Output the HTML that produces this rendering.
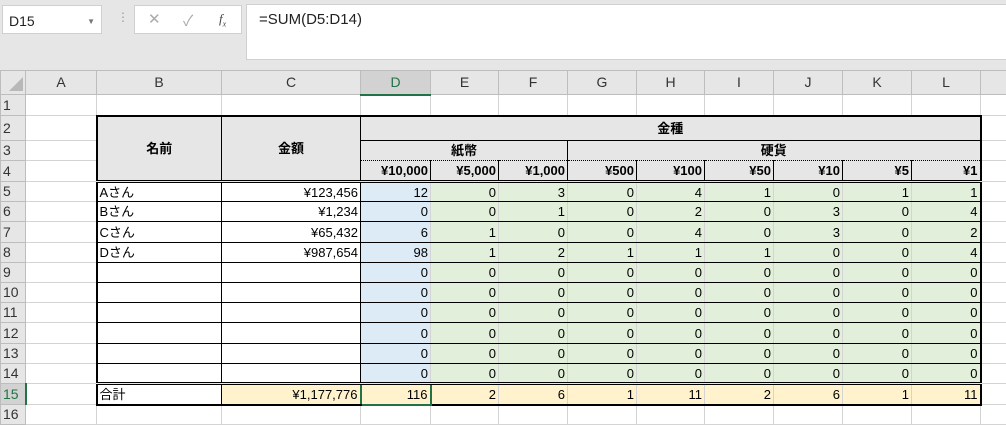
<!DOCTYPE html>
<html><head><meta charset="utf-8">
<style>
*{box-sizing:border-box;margin:0;padding:0}
body{width:1006px;height:420px;overflow:hidden;background:#e6e6e6;font-family:"Liberation Sans","Noto Sans CJK JP",sans-serif;position:relative}
.box{position:absolute;background:#fff;border:1px solid #d0d0d0}
table{position:absolute;left:0;top:70px;border-collapse:collapse;table-layout:fixed;width:1006px;font-size:13px;color:#000}
td{border:1px solid #d4d4d4;background:#fff;height:20px;padding:0 2px;white-space:nowrap;overflow:hidden;line-height:15px}
td.h{background:#e6e6e6;border-color:#bdbdbd;text-align:center;font-size:14px;color:#333}
td.rh{background:#e6e6e6;border-color:#bdbdbd;text-align:left;font-size:14px;color:#333;padding:0 0 0 2px}
td.sel{background:#d2d2d2;border-bottom:2px solid #217346;color:#217346}
td.rsel{background:#d2d2d2;border-right:2px solid #217346;color:#217346}
.g{background:#e7e6e6!important;font-weight:bold;text-align:center;border-color:#000}
.r{text-align:right}
.b{background:#ddebf7!important}
.gr{background:#e2efda!important}
.y{background:#fff2cc!important}
.dr{border-right:1px dotted #000!important}
.bk{border-top:1px solid #000;border-bottom:1px solid #000}
</style></head><body>
<div class="box" style="left:2px;top:5px;width:100px;height:29px;font-size:14px;padding:7px 0 0 6px;color:#222">D15<span style="position:absolute;right:6px;top:11px;font-size:8px;color:#777">▼</span></div>
<div style="position:absolute;left:117px;top:10px;color:#999;font-size:12px">⋮</div>
<div class="box" style="left:134px;top:5px;width:108px;height:29px;color:#aaa;font-size:15px">
<span style="position:absolute;left:13px;top:4px">✕</span><span style="position:absolute;left:48px;top:4px">✓</span><span style="position:absolute;left:84px;top:5px;color:#444;font-style:italic;font-family:'Liberation Serif',serif;font-size:13px">f<sub style="font-size:8px">x</sub></span></div>
<div class="box" style="left:246px;top:4px;width:762px;height:56px;font-size:15px;padding:6px 0 0 12px;color:#222">=SUM(D5:D14)</div>
<table>
<colgroup><col style="width:25px"><col style="width:71px"><col style="width:125px"><col style="width:139px"><col style="width:70px"><col style="width:68px"><col style="width:69px"><col style="width:69px"><col style="width:68px"><col style="width:69px"><col style="width:69px"><col style="width:69px"><col style="width:69px"><col style="width:26px"></colgroup>
<tr style="height:24px"><td class="h" style="background:#e6e6e6"><span style="display:inline-block;width:0;height:0;border-left:14px solid transparent;border-bottom:14px solid #b8b8b8;margin:6px 0 0 6px"></span></td><td class="h">A</td><td class="h">B</td><td class="h">C</td><td class="h sel">D</td><td class="h">E</td><td class="h">F</td><td class="h">G</td><td class="h">H</td><td class="h">I</td><td class="h">J</td><td class="h">K</td><td class="h">L</td><td class="h"></td></tr>
<tr style="height:21px"><td class="rh">1</td><td></td><td></td><td></td><td></td><td></td><td></td><td></td><td></td><td></td><td></td><td></td><td></td><td></td></tr>
<tr style="height:25px"><td class="rh">2</td><td></td>
<td rowspan="3" class="g" style="border:2px solid #000;border-right:1px solid #000;border-bottom:3px double #000">名前</td>
<td rowspan="3" class="g" style="border-top:2px solid #000;border-bottom:3px double #000">金額</td>
<td colspan="9" class="g" style="border-top:2px solid #000;border-right:2px solid #000">金種</td><td></td></tr>
<tr style="height:20px"><td class="rh">3</td><td></td>
<td colspan="3" class="g" style="border-bottom:1px dotted #000">紙幣</td>
<td colspan="6" class="g" style="border-bottom:1px dotted #000;border-right:2px solid #000">硬貨</td><td></td></tr>
<tr style="height:21px"><td class="rh">4</td><td></td>
<td class="g r" style="border-right:1px dotted #000;border-top:1px dotted #000;border-bottom:3px double #000">¥10,000</td>
<td class="g r" style="border-right:1px dotted #000;border-top:1px dotted #000;border-bottom:3px double #000">¥5,000</td>
<td class="g r" style="border-right:1px dotted #000;border-top:1px dotted #000;border-bottom:3px double #000">¥1,000</td>
<td class="g r" style="border-right:1px dotted #000;border-top:1px dotted #000;border-bottom:3px double #000">¥500</td>
<td class="g r" style="border-right:1px dotted #000;border-top:1px dotted #000;border-bottom:3px double #000">¥100</td>
<td class="g r" style="border-right:1px dotted #000;border-top:1px dotted #000;border-bottom:3px double #000">¥50</td>
<td class="g r" style="border-right:1px dotted #000;border-top:1px dotted #000;border-bottom:3px double #000">¥10</td>
<td class="g r" style="border-right:1px dotted #000;border-top:1px dotted #000;border-bottom:3px double #000">¥5</td>
<td class="g r" style="border-right:2px solid #000;border-top:1px dotted #000;border-bottom:3px double #000">¥1</td><td></td></tr>
<tr><td class="rh">5</td><td></td><td class="bk" style="border-left:2px solid #000;border-right:1px solid #000">Aさん</td><td class="bk r" style="border-right:1px solid #000">¥123,456</td><td class="b r bk dr">12</td><td class="gr r bk dr">0</td><td class="gr r bk dr">3</td><td class="gr r bk dr">0</td><td class="gr r bk dr">4</td><td class="gr r bk dr">1</td><td class="gr r bk dr">0</td><td class="gr r bk dr">1</td><td class="gr r bk" style="border-right:2px solid #000">1</td><td></td></tr>
<tr><td class="rh">6</td><td></td><td class="bk" style="border-left:2px solid #000;border-right:1px solid #000">Bさん</td><td class="bk r" style="border-right:1px solid #000">¥1,234</td><td class="b r bk dr">0</td><td class="gr r bk dr">0</td><td class="gr r bk dr">1</td><td class="gr r bk dr">0</td><td class="gr r bk dr">2</td><td class="gr r bk dr">0</td><td class="gr r bk dr">3</td><td class="gr r bk dr">0</td><td class="gr r bk" style="border-right:2px solid #000">4</td><td></td></tr>
<tr style="height:21px"><td class="rh">7</td><td></td><td class="bk" style="border-left:2px solid #000;border-right:1px solid #000">Cさん</td><td class="bk r" style="border-right:1px solid #000">¥65,432</td><td class="b r bk dr">6</td><td class="gr r bk dr">1</td><td class="gr r bk dr">0</td><td class="gr r bk dr">0</td><td class="gr r bk dr">4</td><td class="gr r bk dr">0</td><td class="gr r bk dr">3</td><td class="gr r bk dr">0</td><td class="gr r bk" style="border-right:2px solid #000">2</td><td></td></tr>
<tr><td class="rh">8</td><td></td><td class="bk" style="border-left:2px solid #000;border-right:1px solid #000">Dさん</td><td class="bk r" style="border-right:1px solid #000">¥987,654</td><td class="b r bk dr">98</td><td class="gr r bk dr">1</td><td class="gr r bk dr">2</td><td class="gr r bk dr">1</td><td class="gr r bk dr">1</td><td class="gr r bk dr">1</td><td class="gr r bk dr">0</td><td class="gr r bk dr">0</td><td class="gr r bk" style="border-right:2px solid #000">4</td><td></td></tr>
<tr><td class="rh">9</td><td></td><td class="bk" style="border-left:2px solid #000;border-right:1px solid #000"></td><td class="bk r" style="border-right:1px solid #000"></td><td class="b r bk dr">0</td><td class="gr r bk dr">0</td><td class="gr r bk dr">0</td><td class="gr r bk dr">0</td><td class="gr r bk dr">0</td><td class="gr r bk dr">0</td><td class="gr r bk dr">0</td><td class="gr r bk dr">0</td><td class="gr r bk" style="border-right:2px solid #000">0</td><td></td></tr>
<tr><td class="rh">10</td><td></td><td class="bk" style="border-left:2px solid #000;border-right:1px solid #000"></td><td class="bk r" style="border-right:1px solid #000"></td><td class="b r bk dr">0</td><td class="gr r bk dr">0</td><td class="gr r bk dr">0</td><td class="gr r bk dr">0</td><td class="gr r bk dr">0</td><td class="gr r bk dr">0</td><td class="gr r bk dr">0</td><td class="gr r bk dr">0</td><td class="gr r bk" style="border-right:2px solid #000">0</td><td></td></tr>
<tr><td class="rh">11</td><td></td><td class="bk" style="border-left:2px solid #000;border-right:1px solid #000"></td><td class="bk r" style="border-right:1px solid #000"></td><td class="b r bk dr">0</td><td class="gr r bk dr">0</td><td class="gr r bk dr">0</td><td class="gr r bk dr">0</td><td class="gr r bk dr">0</td><td class="gr r bk dr">0</td><td class="gr r bk dr">0</td><td class="gr r bk dr">0</td><td class="gr r bk" style="border-right:2px solid #000">0</td><td></td></tr>
<tr style="height:21px"><td class="rh">12</td><td></td><td class="bk" style="border-left:2px solid #000;border-right:1px solid #000"></td><td class="bk r" style="border-right:1px solid #000"></td><td class="b r bk dr">0</td><td class="gr r bk dr">0</td><td class="gr r bk dr">0</td><td class="gr r bk dr">0</td><td class="gr r bk dr">0</td><td class="gr r bk dr">0</td><td class="gr r bk dr">0</td><td class="gr r bk dr">0</td><td class="gr r bk" style="border-right:2px solid #000">0</td><td></td></tr>
<tr><td class="rh">13</td><td></td><td class="bk" style="border-left:2px solid #000;border-right:1px solid #000"></td><td class="bk r" style="border-right:1px solid #000"></td><td class="b r bk dr">0</td><td class="gr r bk dr">0</td><td class="gr r bk dr">0</td><td class="gr r bk dr">0</td><td class="gr r bk dr">0</td><td class="gr r bk dr">0</td><td class="gr r bk dr">0</td><td class="gr r bk dr">0</td><td class="gr r bk" style="border-right:2px solid #000">0</td><td></td></tr>
<tr><td class="rh">14</td><td></td><td class="bk" style="border-left:2px solid #000;border-right:1px solid #000;border-bottom:3px double #000"></td><td class="r" style="border-top:1px solid #000;border-right:1px solid #000;border-bottom:3px double #000"></td><td class="b r dr" style="border-top:1px solid #000;border-bottom:3px double #000">0</td><td class="gr r dr" style="border-top:1px solid #000;border-bottom:3px double #000">0</td><td class="gr r dr" style="border-top:1px solid #000;border-bottom:3px double #000">0</td><td class="gr r dr" style="border-top:1px solid #000;border-bottom:3px double #000">0</td><td class="gr r dr" style="border-top:1px solid #000;border-bottom:3px double #000">0</td><td class="gr r dr" style="border-top:1px solid #000;border-bottom:3px double #000">0</td><td class="gr r dr" style="border-top:1px solid #000;border-bottom:3px double #000">0</td><td class="gr r dr" style="border-top:1px solid #000;border-bottom:3px double #000">0</td><td class="gr r" style="border-top:1px solid #000;border-right:2px solid #000;border-bottom:3px double #000">0</td><td></td></tr>
<tr style="height:21px"><td class="rh rsel">15</td><td></td><td style="border-left:2px solid #000;border-right:1px solid #000;border-bottom:2px solid #000">合計</td><td class="y r" style="border-right:1px solid #000;border-bottom:2px solid #000">¥1,177,776</td><td class="y r" style="border:2px solid #217346">116</td><td class="y r dr" style="border-bottom:2px solid #000">2</td><td class="y r dr" style="border-bottom:2px solid #000">6</td><td class="y r dr" style="border-bottom:2px solid #000">1</td><td class="y r dr" style="border-bottom:2px solid #000">11</td><td class="y r dr" style="border-bottom:2px solid #000">2</td><td class="y r dr" style="border-bottom:2px solid #000">6</td><td class="y r dr" style="border-bottom:2px solid #000">1</td><td class="y r" style="border-right:2px solid #000;border-bottom:2px solid #000">11</td><td></td></tr>
<tr><td class="rh">16</td><td></td><td></td><td></td><td></td><td></td><td></td><td></td><td></td><td></td><td></td><td></td><td></td><td></td></tr>
</table>
</body></html>
